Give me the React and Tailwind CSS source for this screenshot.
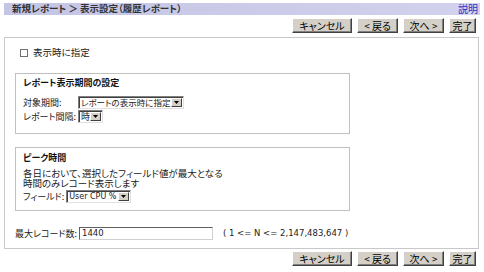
import React from 'react';

const Btn = ({ children, w }) => (
    <div
        className={`${w} h-[15px] flex items-center justify-center bg-[#d4d0c8] border border-t-white border-l-white border-r-[#404040] border-b-[#404040] shadow-[inset_-1px_-1px_0_#808080] text-[10px] text-black leading-none`}
    >
        {children}
    </div>
);

const FakeSelect = ({ label, w }) => (
    <div className={`${w} h-[13px] flex items-stretch bg-white border border-t-[#808080] border-l-[#808080] border-r-[#e0e0e0] border-b-[#e0e0e0] shadow-[inset_1px_1px_0_#404040]`}>
        <div className="flex-1 flex items-center pl-[2px] leading-none whitespace-nowrap overflow-hidden">{label}</div>
        <div className="w-[11px] shrink-0 my-[1px] mr-[1px] flex items-center justify-center bg-[#d4d0c8] border border-t-white border-l-white border-r-[#404040] border-b-[#404040]">
            <svg width="5" height="3" viewBox="0 0 5 3"><path d="M0 0h5L2.5 3z" fill="#000" /></svg>
        </div>
    </div>
);

const ButtonRow = () => (
    <div className="flex justify-end gap-[5px] pr-[4px]">
        <Btn w="w-[60px]">キャンセル</Btn>
        <Btn w="w-[41px]">&lt; 戻る</Btn>
        <Btn w="w-[41px]">次へ &gt;</Btn>
        <Btn w="w-[27px]">完了</Btn>
    </div>
);

export default function App() {
    return (
        <div className="w-[484px] h-[272px] bg-white px-[4px] pt-[3px] text-[9px] text-[#222] font-['Noto_Sans_CJK_JP',sans-serif] [font-feature-settings:'palt'] overflow-hidden">
            <div className="h-[12px] w-[476px] flex items-center justify-between px-[8px] bg-gradient-to-r from-[#c4c4e4] to-[#d2d2ee]">
                <span className="font-bold text-[9.5px] text-[#333] leading-none">新規レポート ＞ 表示設定（履歴レポート）</span>
                <span className="text-[10px] text-[#3030c0] leading-none -mr-[6px]">説明</span>
            </div>

            <div className="mt-[3px]">
                <ButtonRow />
            </div>

            <div className="mt-[4px] w-[475px] h-[212px] border border-[#c8c8c8] pl-[10px] pt-[10px]">
                <div className="flex items-center gap-[5px] pl-[5px] h-[10px]">
                    <div className="w-[8px] h-[8px] border border-[#707070] bg-white"></div>
                    <span className="leading-none text-[9.5px]">表示時に指定</span>
                </div>

                <div className="mt-[15px] w-[335px] h-[61px] border border-[#c0c0c0] px-[7px] pt-[4px]">
                    <div className="font-bold text-[#111] leading-none">レポート表示期間の設定</div>
                    <div className="mt-[9px] grid grid-cols-[auto_auto] justify-start items-center gap-x-[2px] gap-y-[1px]">
                        <span className="leading-none whitespace-nowrap">対象期間:</span>
                        <FakeSelect label={<span className="text-[8.5px]">レポートの表示時に指定</span>} w="w-[106px]" />
                        <span className="leading-none whitespace-nowrap">レポート間隔:</span>
                        <FakeSelect label="時" w="w-[25px]" />
                    </div>
                </div>

                <div className="mt-[13px] w-[335px] h-[64px] border border-[#c0c0c0] px-[7px] pt-[5px]">
                    <div className="font-bold text-[#111] leading-none">ピーク時間</div>
                    <div className="mt-[6px] leading-[10px] text-[9.5px]">
                        各日において、選択したフィールド値が最大となる<br />
                        時間のみレコード表示します
                    </div>
                    <div className="mt-[2px] flex items-center gap-[2px]">
                        <span className="leading-none whitespace-nowrap">フィールド:</span>
                        <FakeSelect label={<span className="font-['DejaVu_Sans'] text-[8px]">User CPU %</span>} w="w-[65px]" />
                    </div>
                </div>

                <div className="mt-[16px] flex items-center">
                    <span className="leading-none whitespace-nowrap">最大レコード数:</span>
                    <div className="ml-[2px] w-[134px] h-[13px] flex items-center pl-[2px] bg-white border border-t-[#606060] border-l-[#606060] border-r-[#d0d0d0] border-b-[#d0d0d0] font-['DejaVu_Sans'] text-[8.5px] leading-none">1440</div>
                    <span className="ml-[10px] font-['DejaVu_Sans'] text-[8.5px] leading-none">( 1 &lt;= N &lt;= 2,147,483,647 )</span>
                </div>
            </div>

            <div className="mt-[2px]">
                <ButtonRow />
            </div>
        </div>
    );
}
